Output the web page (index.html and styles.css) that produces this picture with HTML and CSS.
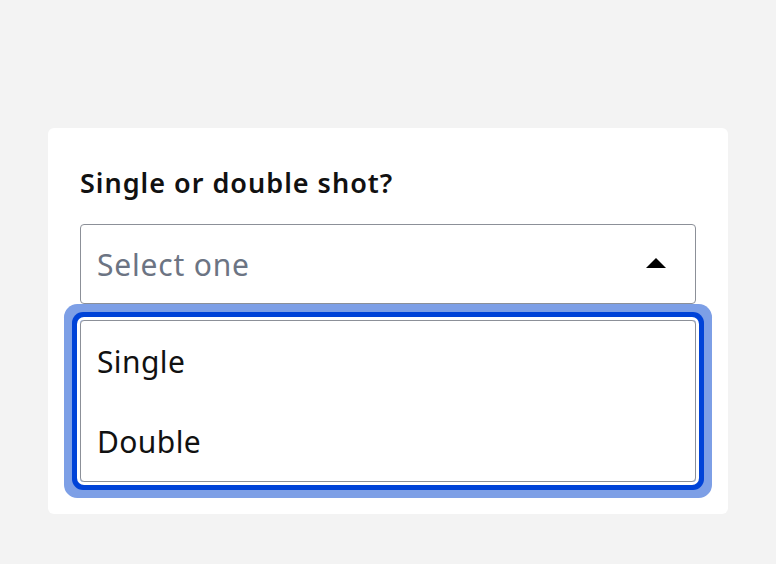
FILE: index.html
```html
<!DOCTYPE html>
<html lang="en">
<head>
<meta charset="utf-8">
<title>Single or double shot?</title>
<link rel="stylesheet" href="styles.css">
</head>
<body>
<main class="page">
  <section class="card">
    <label class="field-label" id="shot-label">Single or double shot?</label>
    <button class="select" type="button" aria-haspopup="listbox" aria-expanded="true" aria-labelledby="shot-label">
      <span class="select-placeholder">Select one</span>
      <svg class="select-arrow" width="20" height="10" viewBox="0 0 20 10" aria-hidden="true"><path d="M0 10 L10 0 L20 10 Z" fill="#000"/></svg>
    </button>
    <ul class="listbox" role="listbox" aria-labelledby="shot-label">
      <li class="option" role="option">Single</li>
      <li class="option" role="option">Double</li>
    </ul>
  </section>
</main>
</body>
</html>
```

FILE: styles.css
```css
* { box-sizing: border-box; }

html, body {
  margin: 0;
  padding: 0;
  background: #f3f3f3;
  font-family: "Noto Sans", "Open Sans", sans-serif;
  color: #111111;
}

.page {
  padding: 128px 48px 0 48px;
}

.card {
  width: 680px;
  background: #ffffff;
  border-radius: 6px;
  padding: 32px;
  display: flex;
  flex-direction: column;
}

.field-label {
  font-size: 27px;
  font-weight: 600;
  letter-spacing: 1px;
  line-height: 46px;
  margin-bottom: 18px;
  color: #111111;
}

.select {
  display: flex;
  align-items: center;
  justify-content: space-between;
  width: 100%;
  height: 80px;
  padding: 0 29px 0 16px;
  background: #ffffff;
  border: 1px solid #8c9098;
  border-radius: 4px;
  font-family: inherit;
  text-align: left;
  cursor: pointer;
}

.select-placeholder {
  font-size: 30px;
  letter-spacing: 0.8px;
  color: #6c7483;
}

.select-arrow {
  display: block;
  margin-bottom: 2px;
}

.listbox {
  list-style: none;
  margin: 16px 0 0 0;
  padding: 0;
  border: 1px solid #8c9098;
  border-radius: 4px;
  box-shadow: 0 0 0 3px #ffffff, 0 0 0 8px #0043d8, 0 0 0 16px #7d9fe6;
}

.option {
  height: 80px;
  display: flex;
  align-items: center;
  padding: 0 16px;
  font-size: 30px;
  letter-spacing: 0.4px;
  color: #111111;
}
```
